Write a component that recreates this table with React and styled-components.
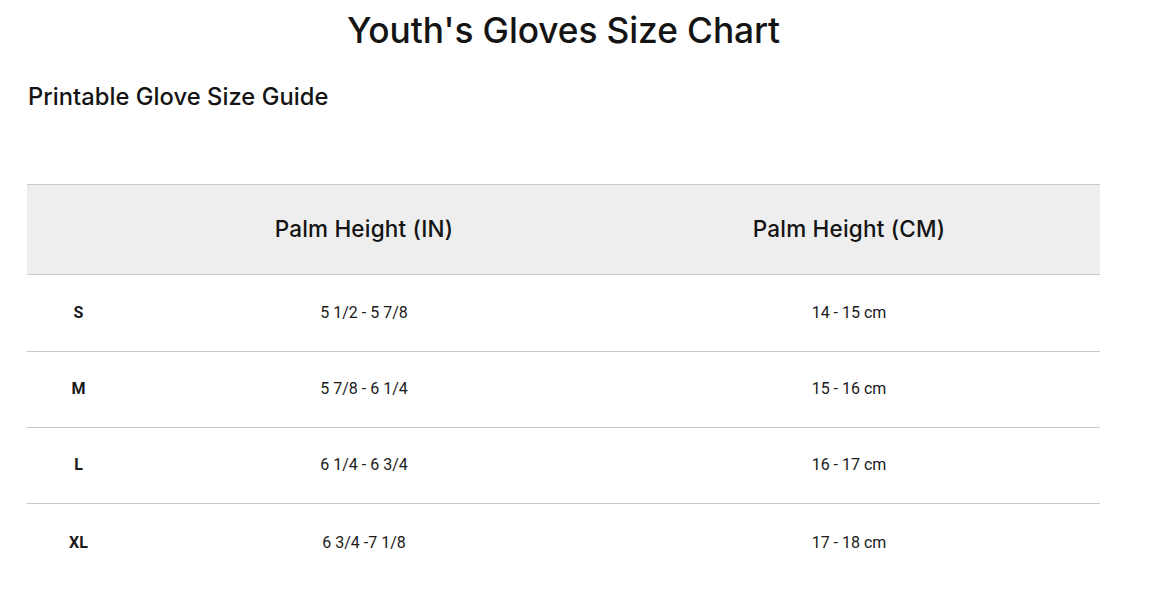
import React from "react";
import styled, { createGlobalStyle } from "styled-components";

const Global = createGlobalStyle`
  html, body { margin: 0; padding: 0; background: #fff; }
  body { font-family: Inter, "Open Sans", sans-serif; color: #141414; }
`;

const Page = styled.div`
  width: 1073px;
  margin-left: 27px;
  padding-top: 10px;
`;

const Title = styled.h1`
  margin: 0;
  text-align: center;
  font-family: Inter, sans-serif;
  font-weight: 500;
  font-size: 35.3px;
  line-height: 42px;
  letter-spacing: -0.1px;
  color: #141414;
`;

const Subtitle = styled.h2`
  margin: 30px 0 0 1px;
  font-family: Inter, sans-serif;
  font-weight: 450;
  font-size: 23.7px;
  line-height: 30px;
  letter-spacing: 0.05px;
  color: #141414;
`;

const Table = styled.div`
  margin-top: 72px;
  display: grid;
  grid-template-columns: 103px 468px 1fr;
  border-top: 1px solid #c9c9c9;
`;

const HeadCell = styled.div`
  height: 89px;
  box-sizing: border-box;
  padding-bottom: 2px;
  background: #eeeeee;
  border-bottom: 1px solid #c9c9c9;
  display: flex;
  align-items: center;
  justify-content: center;
  font-family: Inter, sans-serif;
  font-weight: 500;
  font-size: 22.5px;
  letter-spacing: 0.2px;
  color: #141414;
  height: 90px;
`;

const Cell = styled.div`
  box-sizing: border-box;
  height: ${(p) => (p.$first ? "77px" : "76px")};
  padding-bottom: ${(p) => (p.$last ? "0" : "2px")};
  border-bottom: ${(p) => (p.$last ? "none" : "1px solid #c9c9c9")};
  display: flex;
  align-items: center;
  justify-content: center;
  font-family: Roboto, "Liberation Sans", sans-serif;
  font-size: 16px;
  font-weight: ${(p) => (p.$bold ? 700 : 400)};
  color: #1a1a1a;
`;

const rows = [
  ["S", "5 1/2 - 5 7/8", "14 - 15 cm"],
  ["M", "5 7/8 - 6 1/4", "15 - 16 cm"],
  ["L", "6 1/4 - 6 3/4", "16 - 17 cm"],
  ["XL", "6 3/4 -7 1/8", "17 - 18 cm"],
];

export default function App() {
  return (
    <>
      <Global />
      <Page>
        <Title>Youth's Gloves Size Chart</Title>
        <Subtitle>Printable Glove Size Guide</Subtitle>
        <Table>
          <HeadCell />
          <HeadCell>Palm Height (IN)</HeadCell>
          <HeadCell>Palm Height (CM)</HeadCell>
          {rows.map((r, i) => {
            const last = i === rows.length - 1;
            const first = i === 0;
            return (
              <React.Fragment key={r[0]}>
                <Cell $bold $last={last} $first={first}>{r[0]}</Cell>
                <Cell $last={last} $first={first}>{r[1]}</Cell>
                <Cell $last={last} $first={first}>{r[2]}</Cell>
              </React.Fragment>
            );
          })}
        </Table>
      </Page>
    </>
  );
}
